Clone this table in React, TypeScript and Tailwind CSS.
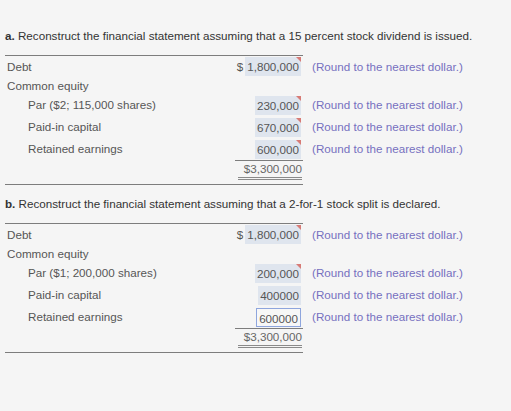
import React from 'react';

type Row = { label: string; indent?: boolean; value?: string; dollar?: boolean; active?: boolean; flag?: boolean };

const Note = () => <span className="ml-[9px] text-[#7670c0]">(Round to the nearest dollar.)</span>;

const Box: React.FC<{ value: string; active?: boolean; flag?: boolean }> = ({ value, active, flag }) => (
  <span
    className={
      'relative inline-block h-[19px] leading-[19px] px-[2px] text-[#555] ' +
      (active ? 'border border-[#8ea5dd] leading-[17px] bg-[#f7f7f7]' : 'bg-[#dfe5ee]')
    }
  >
    {value}
    {flag && (
      <span className="absolute top-0 right-0 w-0 h-0 border-t-[5px] border-l-[5px] border-t-[#d77b76] border-l-transparent" />
    )}
  </span>
);

const Statement: React.FC<{ letter: string; title: string; rows: Row[] }> = ({ letter, title, rows }) => (
  <div>
    <div className="h-[16px] leading-[16px] text-[#333]">
      <span className="font-bold">{letter}</span> {title}
    </div>
    <div className="mt-[11px] w-[298px] h-px bg-[#7d7d7d]" />
    {rows.map((r, i) => (
      <div key={i} className={'flex items-center ' + (i === 0 ? 'h-[21px]' : i === 1 ? 'h-[17px]' : 'h-[22px]')}>
        <div className="flex items-center w-[298px]">
          <div className={'w-[230px] text-[#555] ' + (r.indent ? 'pl-[23px]' : 'pl-[2px]')}>{r.label}</div>
          <div className="w-[68px] flex justify-end items-center pr-[2px]">
            {r.dollar && <span className="mr-[2px] text-[#555]">$</span>}
            {r.value && <Box value={r.value} active={r.active} flag={r.flag} />}
          </div>
        </div>
        {r.value && <Note />}
      </div>
    ))}
    <div className="flex w-[298px] justify-end">
      <div className="w-[68px] border-t border-[#7d7d7d]">
        <div className="h-[16px] leading-[16px] text-right pr-[1px] text-[#666]">$3,300,000</div>
        <div className="ml-[3px] mr-[1px] border-t border-b border-[#8a8a8a] h-[3px]" />
      </div>
    </div>
    <div className="mt-[4px] w-[298px] h-px bg-[#7d7d7d]" />
  </div>
);

export default function App() {
  const a: Row[] = [
    { label: 'Debt', value: '1,800,000', dollar: true, flag: true },
    { label: 'Common equity' },
    { label: 'Par ($2; 115,000 shares)', indent: true, value: '230,000', flag: true },
    { label: 'Paid-in capital', indent: true, value: '670,000', flag: true },
    { label: 'Retained earnings', indent: true, value: '600,000', flag: true },
  ];
  const b: Row[] = [
    { label: 'Debt', value: '1,800,000', dollar: true, flag: true },
    { label: 'Common equity' },
    { label: 'Par ($1; 200,000 shares)', indent: true, value: '200,000', flag: true },
    { label: 'Paid-in capital', indent: true, value: '400000' },
    { label: 'Retained earnings', indent: true, value: '600000', active: true },
  ];
  return (
    <div
      className="w-[511px] h-[411px] bg-[#f5f5f5] pl-[5px] pt-[28px] text-[11.65px]"
      style={{ fontFamily: '"Liberation Sans", Arial, sans-serif' }}
    >
      <Statement
        letter="a."
        title="Reconstruct the financial statement assuming that a 15 percent stock dividend is issued."
        rows={a}
      />
      <div className="h-[11px]" />
      <Statement
        letter="b."
        title="Reconstruct the financial statement assuming that a 2-for-1 stock split is declared."
        rows={b}
      />
    </div>
  );
}
